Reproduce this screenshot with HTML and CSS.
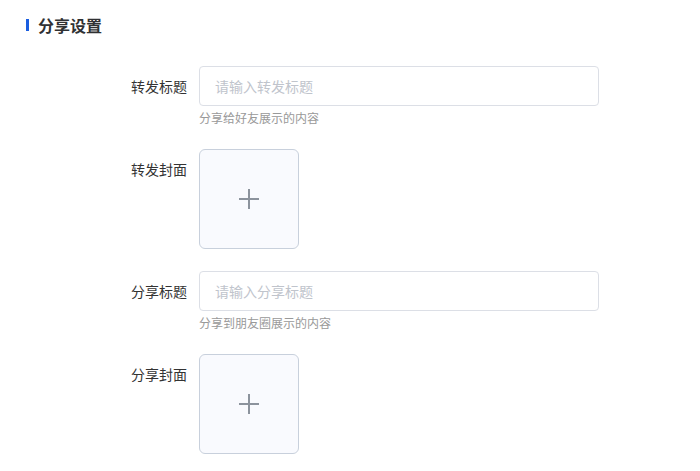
FILE: index.html
```html
<!DOCTYPE html>
<html lang="zh-CN">
<head>
<meta charset="utf-8">
<link rel="stylesheet" href="styles.css">
</head>
<body>
<div class="page">
  <div class="section-title"><span class="bar"></span><span class="title-text">分享设置</span></div>
  <div class="form">
    <div class="row">
      <label class="label">转发标题</label>
      <div class="field">
        <input class="input" type="text" placeholder="请输入转发标题">
        <div class="help">分享给好友展示的内容</div>
      </div>
    </div>
    <div class="row">
      <label class="label">转发封面</label>
      <div class="field">
        <div class="upload">
          <svg width="20" height="20" viewBox="0 0 20 20"><path d="M10 0v20M0 10h20" stroke="#8c939d" stroke-width="2"/></svg>
        </div>
      </div>
    </div>
    <div class="row">
      <label class="label">分享标题</label>
      <div class="field">
        <input class="input" type="text" placeholder="请输入分享标题">
        <div class="help">分享到朋友圈展示的内容</div>
      </div>
    </div>
    <div class="row">
      <label class="label">分享封面</label>
      <div class="field">
        <div class="upload">
          <svg width="20" height="20" viewBox="0 0 20 20"><path d="M10 0v20M0 10h20" stroke="#8c939d" stroke-width="2"/></svg>
        </div>
      </div>
    </div>
  </div>
</div>
</body>
</html>
```
FILE: styles.css
```css
* { box-sizing: border-box; }
html, body { margin: 0; padding: 0; background: #fff; }
body { font-family: "Noto Sans CJK SC", "Noto Sans", sans-serif; color: #333; }
.page { padding: 15px 0 0 26px; }
.section-title { display: flex; align-items: center; height: 20px; }
.bar { width: 3px; height: 12px; background: #1a5ee0; margin-right: 9px; }
.title-text { font-size: 16px; font-weight: bold; color: #303133; line-height: 20px; }
.form { margin-top: 31px; margin-left: 61px; }
.row { display: flex; margin-bottom: 22px; }
.label { width: 112px; padding-right: 12px; text-align: right; font-size: 14px; line-height: 40px; color: #333; }
.field { display: flex; flex-direction: column; }
.input { width: 400px; height: 40px; border: 1px solid #dcdfe6; border-radius: 4px; padding: 0 15px; font-family: inherit; font-size: 14px; color: #606266; outline: none; background: #fff; }
.input::placeholder { color: #c0c4cc; }
.help { margin-top: 3px; height: 18px; font-size: 12px; line-height: 18px; color: #999; }
.upload { width: 100px; height: 100px; border: 1px solid #c8d0dc; border-radius: 6px; background: #f9fafe; display: flex; align-items: center; justify-content: center; }
```
